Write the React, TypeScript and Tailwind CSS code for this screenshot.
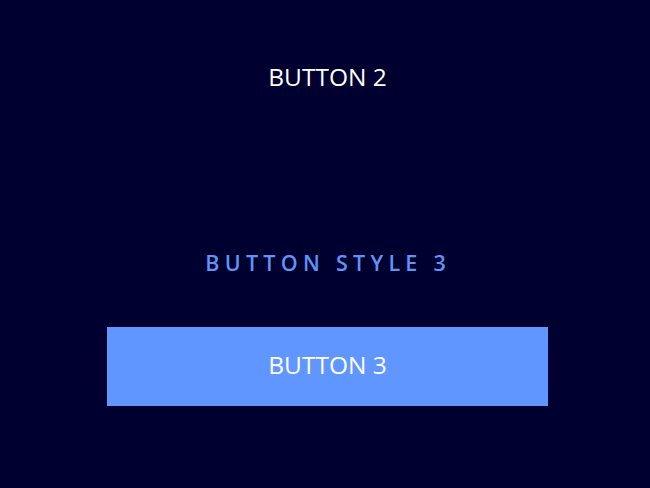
export default function App() {
  return (
    <div
      className="w-[650px] h-[488px] bg-[#000030] flex flex-col items-center pl-[5px]"
      style={{ fontFamily: '"Open Sans", "Noto Sans", sans-serif' }}
    >
      <button
        type="button"
        className="mt-[37px] w-[441px] h-[80px] flex items-center justify-center text-white text-[24.5px]"
      >
        BUTTON 2
      </button>
      <h2 className="mt-[135px] mr-[4px] text-[21.5px] font-semibold tracking-[0.245em] text-[#5f93f5] leading-none pl-[0.245em]">
        BUTTON STYLE 3
      </h2>
      <button
        type="button"
        className="mt-[53px] w-[441px] h-[79px] flex items-center justify-center bg-[#6096ff] text-white text-[24.5px] pb-[2px]"
      >
        BUTTON 3
      </button>
    </div>
  );
}
